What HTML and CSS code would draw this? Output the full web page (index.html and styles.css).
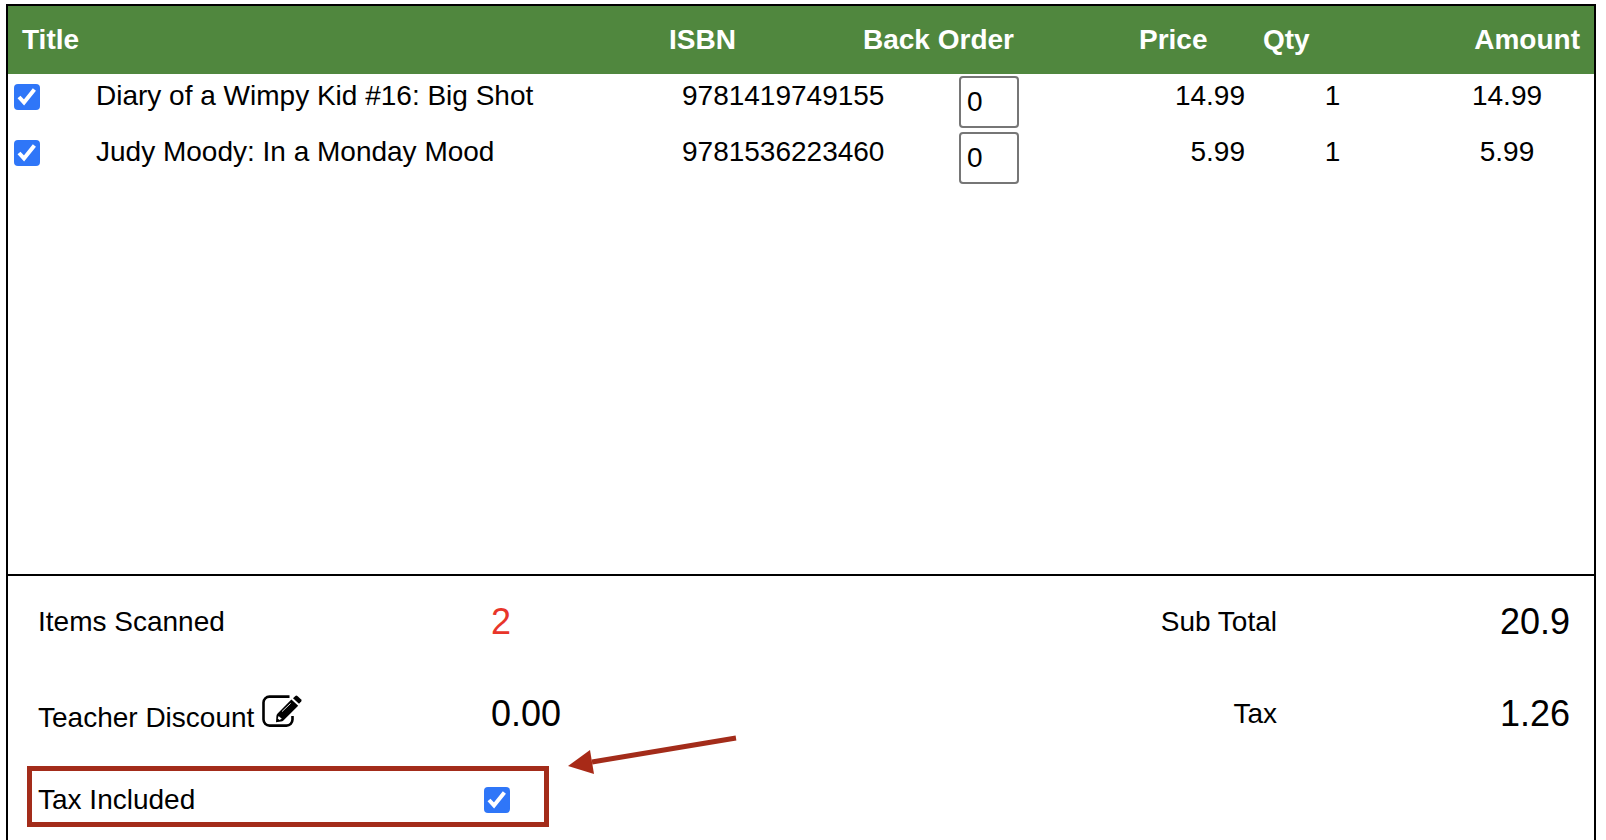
FILE: index.html
```
<!DOCTYPE html>
<html lang="en">
<head>
    <meta charset="UTF-8">
    <title>Book Order</title>
    <link rel="stylesheet" href="styles.css">
</head>
<body>
    <div class="order">
        <div class="items">
            <table class="items-table">
                <thead>
                    <tr>
                        <th>Title</th>
                        <th>ISBN</th>
                        <th>Back Order</th>
                        <th>Price</th>
                        <th>Qty</th>
                        <th class="amount">Amount</th>
                    </tr>
                </thead>
                <tbody>
                    <tr>
                        <td class="select"><input type="checkbox" id="item1" checked></td>
                        <td><label for="item1">Diary of a Wimpy Kid #16: Big Shot</label></td>
                        <td>9781419749155</td>
                        <td class="back-order"><input type="text" value="0" aria-label="Back order, Diary of a Wimpy Kid"></td>
                        <td class="price">14.99</td>
                        <td class="qty">1</td>
                        <td class="amount">14.99</td>
                    </tr>
                    <tr>
                        <td class="select"><input type="checkbox" id="item2" checked></td>
                        <td><label for="item2">Judy Moody: In a Monday Mood</label></td>
                        <td>9781536223460</td>
                        <td class="back-order"><input type="text" value="0" aria-label="Back order, Judy Moody"></td>
                        <td class="price">5.99</td>
                        <td class="qty">1</td>
                        <td class="amount">5.99</td>
                    </tr>
                </tbody>
            </table>
        </div>

        <div class="summary">
            <div class="summary-left">
                <div class="summary-row">
                    <span>Items Scanned</span>
                    <span class="value scanned">2</span>
                </div>
                <div class="summary-row">
                    <span>Teacher Discount
                        <button type="button" class="edit-btn" aria-label="Edit teacher discount">
                            <svg width="40" height="32" viewBox="0 0 40 32">
                                <path d="M27.5 1.6H7.5a6 6 0 0 0-6 6v17a6 6 0 0 0 6 6h17a6 6 0 0 0 6-6V21" fill="none" stroke="#000" stroke-width="2.6"/>
                                <path d="M29.4 4.4L36.2 10.8L21.4 25.4Q20.4 26.4 19 26.6L14 27.2L14.4 21.2Q14.4 19.6 15.6 18.4Z"/>
                                <path d="M31 3.2L33.4 1Q34.4 0.2 35.4 1L39.2 4.6Q40 5.6 39.2 6.6L37 8.8Z"/>
                                <path d="M20 16.6L28.6 8.4" stroke="#fff" stroke-width="0.9"/>
                                <path d="M16.6 21L19.8 23.8L17.4 25L15.8 23.6Z" fill="#fff"/>
                            </svg>
                        </button>
                    </span>
                    <span class="value">0.00</span>
                </div>
                <div class="summary-row tax-included">
                    <label for="taxIncluded">Tax Included</label>
                    <input type="checkbox" id="taxIncluded" checked>
                    <svg class="arrow" width="170" height="42" viewBox="0 0 170 42">
                        <path d="M24 28L168 4" stroke="#a32c1a" stroke-width="5"/>
                        <path d="M0 32L22 16L26 40Z" fill="#a82a17"/>
                    </svg>
                </div>
            </div>

            <div class="summary-right">
                <div class="total-row">
                    <span>Sub Total</span>
                    <span class="value">20.9</span>
                </div>
                <div class="total-row">
                    <span>Tax</span>
                    <span class="value">1.26</span>
                </div>
            </div>
        </div>
    </div>
</body>
</html>
```
FILE: styles.css
```
* {
    box-sizing: border-box;
}
body {
    margin: 4px 10px 0 6px;
    font-family: Arial, "Liberation Sans", sans-serif;
    font-size: 28px;
    line-height: 32px;
    color: #000;
    background-color: #fff;
}
.order {
    min-height: calc(100vh - 4px);
    border: 2px solid #000;
    border-bottom: none;
}

/* Scanned items */
.items {
    min-height: 570px;
    border-bottom: 2px solid #000;
}
.items-table,
.items-table thead,
.items-table tbody {
    display: block;
}
.items-table tr {
    display: grid;
    white-space: nowrap;
}
.items-table thead tr {
    grid-template-columns:
        minmax(0, 661fr) minmax(0, 194fr) minmax(0, 276fr)
        minmax(0, 124fr) minmax(0, 100fr) minmax(0, 231fr);
    background-color: #50873e;
    color: #fff;
}
.items-table tbody tr {
    grid-template-columns:
        minmax(0, 88fr) minmax(0, 586fr) minmax(0, 277fr) minmax(0, 161fr)
        minmax(0, 125fr) minmax(0, 175fr) minmax(0, 174fr);
}
th {
    padding: 18px 0;
    text-align: left;
}
th:first-child {
    padding-left: 14px;
}
th.amount {
    padding-right: 14px;
    text-align: right;
}
td {
    padding: 6px 0 0;
}
td.select {
    display: flex;
    padding: 10px 0 0 6px;
}
td.back-order {
    display: flex;
    padding: 2px 0;
}
td.price {
    text-align: right;
}
td.qty,
td.amount {
    text-align: center;
}
input[type="text"] {
    width: 60px;
    height: 52px;
    padding: 0 6px;
    border: 2px solid #767676;
    border-radius: 4px;
    font: inherit;
}
input[type="checkbox"] {
    appearance: none;
    width: 26px;
    height: 26px;
    margin: 0;
    border: 2px solid #767676;
    border-radius: 4px;
}
input[type="checkbox"]:checked {
    border: none;
    background: #2f76f8 url("data:image/svg+xml,%3Csvg xmlns='http://www.w3.org/2000/svg' viewBox='0 0 26 26'%3E%3Cpath d='M5 13L10 18.4L20.4 5.4' fill='none' stroke='%23fff' stroke-width='4'/%3E%3C/svg%3E");
}

/* Totals below the items */
.summary {
    display: grid;
    grid-template-columns: minmax(0, 522fr) minmax(0, 549fr) minmax(0, 472fr);
    padding: 0 24px 0 19px;
    white-space: nowrap;
}
.summary-right {
    grid-column: 3;
}
.summary-row,
.total-row {
    display: grid;
    align-items: center;
    height: 92px;
}
.summary-row {
    grid-template-columns: minmax(0, 453fr) minmax(0, 58fr);
    padding-left: 11px;
}
.total-row {
    grid-template-columns: minmax(0, 179fr) minmax(0, 293fr);
    text-align: right;
}
.value {
    font-size: 36px;
}
.scanned {
    color: #e8352a;
}
.edit-btn {
    padding: 0;
    border: none;
    background: none;
    cursor: pointer;
}
.edit-btn svg {
    display: block;
}
.tax-included {
    position: relative;
    grid-template-columns: minmax(0, 446fr) minmax(0, 60fr);
    height: 61px;
    margin-top: 6px;
    padding: 6px 0 0 6px;
    border: 5px solid #a32c1a;
}
.arrow {
    position: absolute;
    top: -37px;
    left: calc(100% + 24px);
}
```
